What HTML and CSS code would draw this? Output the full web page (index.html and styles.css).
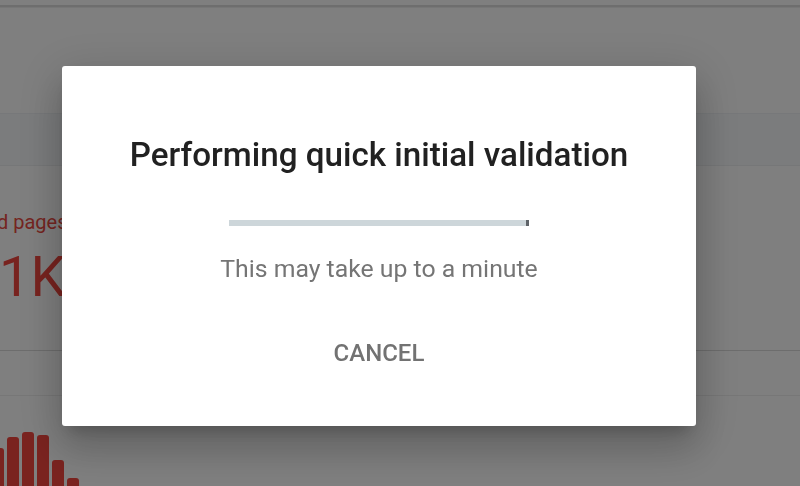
FILE: index.html
```html
<!DOCTYPE html>
<html lang="en">
<head>
<meta charset="utf-8">
<title>Validation</title>
<link rel="stylesheet" href="styles.css">
</head>
<body>
<div class="page">
  <header class="topbar"></header>
  <div class="toolbar"></div>
  <section class="summary">
    <div class="stat-label">Affected pages</div>
    <div class="stat-value">1K</div>
  </section>
  <div class="chart-head"></div>
  <div class="chart">
    <span class="bar" style="height:38px"></span>
    <span class="bar" style="height:49px"></span>
    <span class="bar" style="height:54px"></span>
    <span class="bar" style="height:51px"></span>
    <span class="bar" style="height:26px"></span>
    <span class="bar" style="height:8px"></span>
  </div>
</div>
<div class="scrim">
  <div class="dialog" role="dialog" aria-modal="true">
    <h2 class="dialog-title">Performing quick initial validation</h2>
    <div class="progress"><span class="progress-fill"></span></div>
    <p class="dialog-text">This may take up to a minute</p>
    <button class="btn-cancel" type="button">CANCEL</button>
  </div>
</div>
</body>
</html>
```

FILE: styles.css
```css
* { box-sizing: border-box; }

html, body {
  margin: 0;
  height: 486px;
  overflow: hidden;
}

body {
  background: #ffffff;
  font-family: Roboto, "Noto Sans", Arial, sans-serif;
}

.page {
  display: flex;
  flex-direction: column;
  height: 486px;
}

.topbar {
  height: 7px;
  border-bottom: 2px solid #dcdcdc;
  box-shadow: 0 1px 0 #eeeeee;
}

.toolbar {
  margin-top: 106px;
  height: 53px;
  background: #f6f8fb;
  border-top: 1px solid #eef1f4;
  border-bottom: 1px solid #eceef0;
}

.summary {
  height: 185px;
  padding-top: 44px;
  border-bottom: 1px solid #dadada;
}

.stat-label {
  margin-left: -68px;
  font-size: 20px;
  line-height: 24px;
  color: #ea4a42;
  white-space: nowrap;
}

.stat-value {
  margin-top: 11px;
  margin-left: -1px;
  font-size: 56px;
  line-height: 64px;
  color: #f0473f;
  white-space: nowrap;
}

.chart-head {
  height: 45px;
  border-bottom: 1px solid #eeeeee;
}

.chart {
  flex: 1;
  display: flex;
  align-items: flex-end;
  gap: 3px;
  margin-left: -8px;
}

.bar {
  width: 12px;
  background: #f4473f;
  border-radius: 3px 3px 0 0;
}

.scrim {
  position: fixed;
  inset: 0;
  background: rgba(0, 0, 0, 0.5);
  padding: 66px 0 0 62px;
}

.dialog {
  width: 634px;
  height: 360px;
  background: #ffffff;
  border-radius: 3px;
  padding-top: 69px;
  display: flex;
  flex-direction: column;
  align-items: center;
  box-shadow: 0 11px 15px -7px rgba(0,0,0,0.2),
              0 24px 38px 3px rgba(0,0,0,0.14),
              0 9px 46px 8px rgba(0,0,0,0.12);
}

.dialog-title {
  margin: 0;
  font-size: 33.2px;
  line-height: 40px;
  font-weight: 500;
  color: #212121;
  white-space: nowrap;
}

.progress {
  margin-top: 45px;
  width: 300px;
  height: 6px;
  background: #cdd6da;
  display: flex;
  justify-content: flex-end;
}

.progress-fill {
  width: 3px;
  background: #5f6368;
}

.dialog-text {
  margin: 28px 0 0;
  font-size: 24.8px;
  line-height: 30px;
  color: #757575;
  white-space: nowrap;
}

.btn-cancel {
  margin-top: 54px;
  padding: 0;
  border: 0;
  background: none;
  font-family: inherit;
  font-size: 24px;
  line-height: 30px;
  font-weight: 500;
  color: #727272;
  cursor: pointer;
}
```
